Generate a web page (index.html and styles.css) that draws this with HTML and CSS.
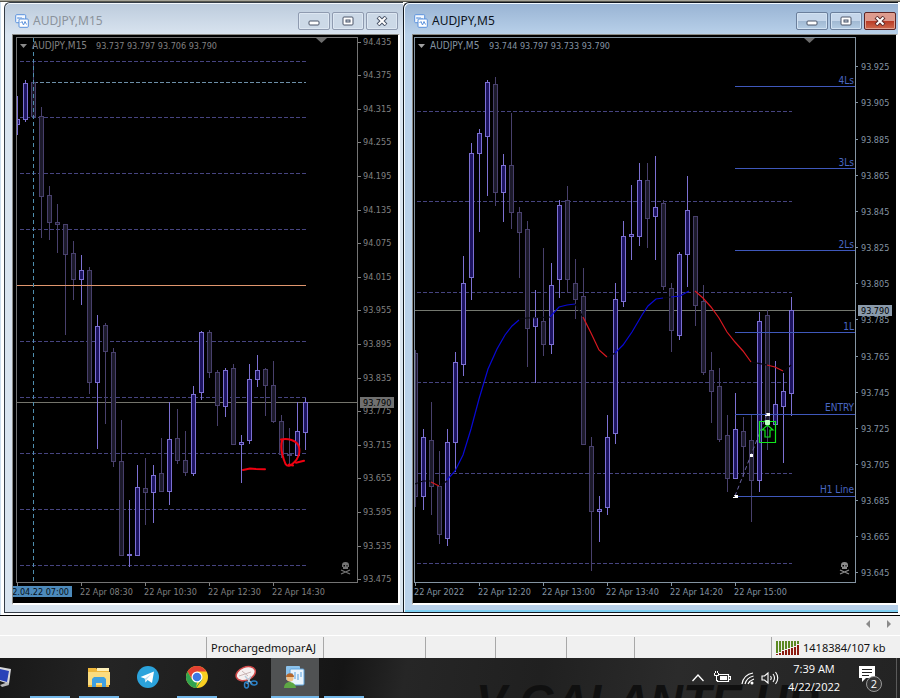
FILE: index.html
```html
<!DOCTYPE html>
<html lang="en">
<head>
<meta charset="utf-8">
<title>AUDJPY charts</title>
<link rel="stylesheet" href="styles.css">
</head>
<body>
<main class="desktop">
  <section class="window" aria-label="AUDJPY,M15">
    <header class="titlebar">
      <svg class="app-icon" viewBox="0 0 14 14" aria-hidden="true"><rect x=".7" y=".7" width="10" height="8" rx="1" fill="#f4f9ff" stroke="#5b92dd"/><path d="M2 4h1.500M4 5V3M6 5V3M8 4v1" stroke="#5b92dd" fill="none"/><rect x="4" y="5" width="9.300" height="8.300" rx="1" fill="#fff" stroke="#5b92dd"/><path d="M5.500 9l1.500-1.500 1.500 3.500L10 7.500l1.500 3" stroke="#5b92dd" fill="none"/></svg>
      <h2>AUDJPY,M15</h2>
      <div class="controls">
        <button aria-label="Minimize"><svg viewBox="0 0 12 10"><rect x="1" y="5" width="10" height="4" rx="1" fill="#fff" stroke="#4a5468"/></svg></button>
        <button aria-label="Restore"><svg viewBox="0 0 12 10"><rect x="1" y="1" width="10" height="8" rx="1" fill="#fff" stroke="#4a5468"/><rect x="4" y="4" width="4" height="2" fill="#cfd9e6" stroke="#4a5468"/></svg></button>
        <button aria-label="Close"><svg viewBox="0 0 12 10"><path d="M2 1l8 8M10 1L2 9" stroke="#4a5468" stroke-width="4"/><path d="M2.500 1.500l7 7M9.500 1.500l-7 7" stroke="#fff" stroke-width="2"/></svg></button>
      </div>
    </header>
    <svg id="m15" class="chart" viewBox="13 35 385 568" role="img" aria-label="AUDJPY 15 minute chart"></svg>
  </section>
  <section class="window active" aria-label="AUDJPY,M5">
    <header class="titlebar">
      <svg class="app-icon" viewBox="0 0 14 14" aria-hidden="true"><rect x=".7" y=".7" width="10" height="8" rx="1" fill="#f4f9ff" stroke="#5b92dd"/><path d="M2 4h1.500M4 5V3M6 5V3M8 4v1" stroke="#5b92dd" fill="none"/><rect x="4" y="5" width="9.300" height="8.300" rx="1" fill="#fff" stroke="#5b92dd"/><path d="M5.500 9l1.500-1.500 1.500 3.500L10 7.500l1.500 3" stroke="#5b92dd" fill="none"/></svg>
      <h2>AUDJPY,M5</h2>
      <div class="controls">
        <button aria-label="Minimize"><svg viewBox="0 0 12 10"><rect x="1" y="5" width="10" height="4" rx="1" fill="#fff" stroke="#4a5468"/></svg></button>
        <button aria-label="Restore"><svg viewBox="0 0 12 10"><rect x="1" y="1" width="10" height="8" rx="1" fill="#fff" stroke="#4a5468"/><rect x="4" y="4" width="4" height="2" fill="#cfd9e6" stroke="#4a5468"/></svg></button>
        <button class="close" aria-label="Close"><svg viewBox="0 0 12 10"><path d="M2 1l8 8M10 1L2 9" stroke="#5c2c2c" stroke-width="4"/><path d="M2.500 1.500l7 7M9.500 1.500l-7 7" stroke="#fff" stroke-width="2"/></svg></button>
      </div>
    </header>
    <svg id="m5" class="chart" viewBox="413 35 483 568" role="img" aria-label="AUDJPY 5 minute chart"></svg>
  </section>
</main>
<nav class="tabstrip" aria-label="Chart tabs">
  <button aria-label="Scroll left"><svg viewBox="0 0 5 8"><path d="M4 0v8L0 4z" fill="#8a8a8a"/></svg></button>
  <button aria-label="Scroll right"><svg viewBox="0 0 5 8"><path d="M1 0v8l4-4z" fill="#8a8a8a"/></svg></button>
</nav>
<div class="statusbar">
  <span></span><span class="profile">ProchargedmoparAJ</span><span></span><span></span><span></span><span></span><span></span>
  <span class="traffic"><svg viewBox="0 0 23 14" aria-hidden="true"><path d="M1 0v12M4 0v11M7 0v9M10 0v8M13 0v7M16 0v6M19 0v5M22 0v3" stroke="#5c8a22" stroke-width="2"/><path d="M1 13v1M4 12v2M7 10v4M10 9v5M13 8v6M16 7v7M19 6v8M22 4v10" stroke="#8e1c10" stroke-width="2"/></svg>1418384/107 kb</span>
</div>
<footer class="taskbar">
  <span class="wallpaper" aria-hidden="true">V GALANTE UP</span>
  <div class="apps">
    <button class="edge" aria-label="Computer"><svg viewBox="0 0 24 24"><path d="M8 2l11 2-2 15-9-3z" fill="#d8d8dc"/><path d="M8 4l9 2-2 11-7-2z" fill="#2942b8"/><path d="M8 20l8-3 1 3-7 2z" fill="#b8b8b8"/></svg></button>
    <button class="running" aria-label="Terminal"></button>
    <button class="running" aria-label="File Explorer"><svg viewBox="0 0 24 24"><path d="M1 3h8l2 2h11v17H1z" fill="#f0b83c"/><path d="M1 7h22v13H1z" fill="#fbdc7f"/><path d="M10 3h12v3H10z" fill="#fdf0b8"/><path d="M5 22v-8l2-2h10l2 2v8h-4v-4H9v4z" fill="#3fa0e0"/></svg></button>
    <button aria-label="Telegram"><svg viewBox="0 0 24 24"><circle cx="12" cy="12" r="11" fill="#2ba3dc"/><path d="M4.500 12L18 6.500 16 18l-4.500-3-2 2.500-.8-4z" fill="#fff"/><path d="M9 13.500L15.500 9l-5 5.500-1 3z" fill="#b8dcf0"/></svg></button>
    <button class="running" aria-label="Chrome"><svg viewBox="0 0 24 24"><circle cx="12" cy="12" r="11" fill="#f8cf22"/><path d="M2.500 6.500A11 11 0 0 1 21.500 6.500H12v5L7.500 15z" fill="#e34133"/><path d="M2.500 6.500L7.300 15 12 17l-1 6A11 11 0 0 1 2.500 6.500z" fill="#31a350"/><path d="M11 23l5.800-8.500" stroke="#31a350"/><circle cx="12" cy="12" r="5.500" fill="#fff"/><circle cx="12" cy="12" r="4.300" fill="#3d78e3"/></svg></button>
    <button aria-label="Snipping Tool"><svg viewBox="0 0 24 24"><ellipse cx="11.500" cy="8.500" rx="10" ry="6.500" transform="rotate(-22 12 8)" fill="#f6f0f0" stroke="#d04a4a" stroke-width="1.500"/><path d="M5 11l12-4M8 6l6 5" stroke="#c9b4b4"/><path d="M11 11l7 8M17 11l-4 8" stroke="#b9cddd" stroke-width="1.500"/><ellipse cx="12.500" cy="20" rx="2" ry="3" fill="none" stroke="#2b82c8" stroke-width="1.500"/><ellipse cx="20" cy="18" rx="3" ry="2" fill="none" stroke="#2b82c8" stroke-width="1.500"/></svg></button>
    <button class="running current" aria-label="MetaTrader"><svg viewBox="0 0 24 24"><rect x="3" y="1" width="14" height="14" rx="1" fill="#8bc2ec"/><rect x="7" y="4" width="14" height="16" rx="1" fill="#eaf4fc" stroke="#5fa3dc"/><path d="M9 8v5M12 7v7M15 9v6M18 7v5" stroke="#58a0dd"/><circle cx="7" cy="13" r="3.500" fill="#f1c28b"/><path d="M3 12c0-5 8-5 8 0z" fill="#b5672b"/><path d="M1 23c0-8 11-8 12 0z" fill="#5da744"/></svg></button>
    <button class="running" aria-label="Folder"></button>
  </div>
  <div class="tray">
    <svg class="chevron" viewBox="0 0 14 16"><path d="M1.500 11L7 5l5.500 6" fill="none" stroke="#fff" stroke-width="1.300"/></svg>
    <svg class="battery" viewBox="0 0 18 16"><path d="M6 4.500h9.500v7H4.500V10M15.500 6.500h2v3h-2" fill="none" stroke="#fff" stroke-width="1.200"/><rect x="7" y="6" width="7" height="4" fill="#fff"/><path d="M1.500 3v2.500h4V3M2.500 1v2M4.500 1v2M3.500 5v6" stroke="#fff" fill="none"/></svg>
    <svg class="wifi" viewBox="0 0 14 16"><g fill="none" stroke="#fff" stroke-width="1.200"><path d="M12 3C6 4 2 8 1 14"/><path d="M12.500 6C8 7 5 10 4 14"/><path d="M13 9c-3 1-5 3-6 5"/></g><circle cx="11" cy="13" r="1.500" fill="#fff"/></svg>
    <svg class="speaker" viewBox="0 0 18 16"><path d="M1 6h2.500L7 3v10l-3.500-3H1z M9.500 6q1.500 2 0 4M12 4q3 4 0 8M14.500 2q4.500 6 0 12" fill="none" stroke="#fff" stroke-width="1.100"/></svg>
    <time class="clock" datetime="2022-04-22T07:39">7:39 AM<br>4/22/2022</time>
    <button class="notify" aria-label="2 notifications"><svg viewBox="0 0 18 18"><path d="M1 1h16v12h-9l-4 4v-4H1z" fill="#fff"/><path d="M4 4.500h10M4 7.500h10M4 10.500h7" stroke="#222"/></svg><span class="badge">2</span></button>
  </div>
</footer>
<script src="charts.js"></script>
</body>
</html>
```
FILE: styles.css
```css
* { box-sizing: border-box; }
body {
  margin: 0;
  background: #fff;
  font-family: "Noto Sans", "Open Sans", sans-serif;
  font-size: 12px;
  color: #111;
}
button {
  padding: 0;
  border: 0;
  background: none;
  font: inherit;
}
svg { display: block; }

.desktop {
  display: grid;
  grid-template-columns: 399fr 495fr;
  padding: 1px 2px 2px 4px;
  background: #fff;
  border-top: 1px solid #a5a397;
  border-bottom: 1px solid #000;
  box-shadow: inset 0 1px #55554c, inset 1px 0 #cfdfee;
}
.window {
  min-width: 0;
  padding: 0 3px 7px 7px;
  border: solid #343c46;
  border-width: 1px 0 1px 1px;
  border-radius: 6px 0 0 0;
  background: linear-gradient(#bccbdc, #d9e4f0 32px, #d9e4ef);
  box-shadow: inset 0 1px #f4f8fc;
}
.window.active {
  padding: 0 0 7px 8px;
  border-color: #10161e;
  background: linear-gradient(#98b3d3, #b9d1ea 32px, #b9d1ea);
  box-shadow: inset 1px 1px #f0f8ff, inset 0 -2px #7fd0f2;
}
.titlebar {
  display: flex;
  align-items: center;
  height: 31px;
  gap: 4px;
  padding: 4px 2px 0 3px;
}
.active .titlebar { padding: 4px 2px 0 2px; }
.titlebar h2 {
  flex: 1;
  margin: 0;
  font-size: 12px;
  font-weight: 400;
  line-height: 16px;
  color: #8b939c;
}
.active .titlebar h2 { color: #0c1420; }
.app-icon { width: 14px; height: 14px; }
.controls { display: flex; gap: 2px; }
.controls button {
  display: grid;
  place-items: center;
  width: 32px;
  height: 18px;
  border: 1px solid #8f9bb0;
  border-radius: 2px;
  background: #ccd9e7;
  box-shadow: inset 0 0 0 1px #dde7f2;
}
.active .controls button {
  border-color: #6b7f9c;
  background: linear-gradient(#c5d6ea 50%, #a0b8d2 50%, #b5cde4);
  box-shadow: inset 0 0 0 1px #d2e2f2;
}
.active .controls .close {
  border-color: #5c2426;
  background: linear-gradient(#dd9a8e 50%, #b93a25 50%, #cf6a4e);
  box-shadow: inset 0 0 0 1px #e0a090;
}
.controls svg { width: 12px; height: 10px; }

.chart {
  width: 100%;
  height: auto;
  border: solid;
  border-width: 1px 2px 2px 1px;
  border-color: #8b8b87 #fff #fff #8b8b87;
  background: #000;
  font-family: "DejaVu Sans Condensed", "DejaVu Sans", sans-serif;
  font-size: 9px;
}
.chart .name { font-size: 10px; }

.tabstrip {
  display: flex;
  justify-content: flex-end;
  align-items: center;
  gap: 15px;
  height: 20px;
  padding: 0 9px 4px 0;
  border-bottom: 1px solid #fff;
  background: #f0f0f0;
}
.tabstrip svg { width: 5px; height: 8px; }

.statusbar {
  display: grid;
  grid-template-columns: 206fr 117fr 102fr 70fr 71fr 68fr 71fr 195fr;
  height: 22px;
  padding-top: 1px;
  background: #f0f0f0;
  line-height: 20px;
  font-size: 11px;
}
.statusbar span {
  display: flex;
  align-items: center;
  white-space: nowrap;
}
.statusbar span + span { border-left: 1px solid #a8a8a8; }
.statusbar .profile { padding-left: 4px; }
.statusbar span.traffic { gap: 4px; margin-left: 66px; padding-left: 4px; }
.traffic svg { width: 23px; height: 14px; flex: none; }

.taskbar {
  position: relative;
  display: flex;
  justify-content: space-between;
  height: 40px;
  overflow: hidden;
  background: linear-gradient(100deg, #181818, #242424 12%, #1b1b1b 30%, #151515 38%, #262626 45%, #202020 60%, #2b2b2b 75%, #232323);
  color: #fff;
}
.wallpaper {
  position: absolute;
  left: 476px;
  top: 20px;
  font: italic bold 46px/46px "Liberation Sans", sans-serif;
  white-space: nowrap;
  color: #101010;
}
.apps { display: flex; position: relative; }
.apps button {
  display: grid;
  place-items: center;
  width: 40px;
  margin-right: 9px;
  border-bottom: 2px solid transparent;
}
.apps .edge { width: 21px; place-items: center start; }
.apps .running { border-bottom-color: #74b8ea; }
.apps .current { width: 48px; margin: 0 5px 0 -4px; background: #505253; }
.apps svg { width: 24px; height: 24px; }
.apps .edge svg { margin-left: -8px; }
.tray {
  position: relative;
  display: flex;
  align-items: center;
  padding-right: 3px;
  font-family: "Open Sans", sans-serif;
}
.tray::after {
  content: "";
  align-self: stretch;
  width: 1px;
  margin-left: 20px;
  background: #5a5a5a;
}
.chevron { width: 14px; height: 16px; margin-right: 8px; }
.battery { width: 18px; height: 16px; margin-right: 10px; }
.wifi { width: 14px; height: 16px; margin-right: 6px; }
.speaker { width: 18px; height: 16px; margin-right: 7px; }
.clock {
  width: 56px;
  font-size: 11px;
  line-height: 18px;
  text-align: center;
}
.notify {
  position: relative;
  margin-left: 16px;
  color: #fff;
}
.notify > svg { width: 18px; height: 18px; margin-bottom: 8px; }
.badge {
  position: absolute;
  right: -6px;
  bottom: -1px;
  width: 16px;
  height: 16px;
  border: 1px solid #9a9a9a;
  border-radius: 50%;
  background: #333;
  font-size: 11px;
  line-height: 14px;
  text-align: center;
}
```
FILE: charts.js
```js
const NS = "http://www.w3.org/2000/svg";

function add(parent, name, attrs, text) {
  const el = document.createElementNS(NS, name);
  for (const key in attrs) el.setAttribute(key, attrs[key]);
  if (text !== undefined) el.textContent = text;
  parent.appendChild(el);
  return el;
}
function hline(svg, x1, x2, y, color, dash) {
  add(svg, "line", { x1, x2, y1: y + 0.5, y2: y + 0.5, stroke: color, "stroke-dasharray": dash || "none", "shape-rendering": "crispEdges" });
}
function vline(svg, x, y1, y2, color, dash) {
  add(svg, "line", { x1: x + 0.5, x2: x + 0.5, y1, y2, stroke: color, "stroke-dasharray": dash || "none", "shape-rendering": "crispEdges" });
}
function label(svg, x, y, text, fill, anchor, cls) {
  add(svg, "text", { x, y, fill, "text-anchor": anchor || "start", class: cls || "scale" }, text);
}

// Each candle: high, body top, body bottom, low, 1 for rising / 0 for falling.
function candles(svg, left, list) {
  list.forEach(([high, top, bottom, low, up], i) => {
    const x = left + i * 8;
    const color = up ? "#7c70d2" : "#48406c";
    vline(svg, x, high, low + 1, color);
    const clip = i === 0 ? 2 : 0;
    add(svg, "rect", {
      x: x - 1.5 + clip, y: top + 0.5, width: 4 - clip, height: Math.max(bottom - top, 1),
      fill: up ? "#1d1460" : "#1c1a2b", stroke: color, "shape-rendering": "crispEdges"
    });
  });
}
function frame(svg, x1, x2, color) {
  add(svg, "rect", { x: x1 + 0.5, y: 37.5, width: x2 - x1, height: 545, fill: "none", stroke: color, "shape-rendering": "crispEdges" });
}
function skull(svg, cx, color) {
  const g = add(svg, "g", { fill: color });
  add(g, "path", { d: `M${cx - 3} 565q0-3 3.500-3t3.500 3v2h-1v2h-5v-2h-1z` });
  add(g, "path", { d: `M${cx - 1.500} 565h1.500v1.500h-1.500zM${cx + 1.500} 565h1v1.500h-1z`, fill: "#000" });
  add(g, "path", { d: `M${cx - 4} 570l9 4M${cx + 5} 570l-9 4`, stroke: color, "stroke-width": 1.300 });
}

function drawM15() {
  const svg = document.getElementById("m15");
  const gray = "#808080";
  [61, 117, 173, 229, 341, 397, 453, 509, 565].forEach(y => hline(svg, 20, 306, y, "#464480", "4 2"));
  hline(svg, 34, 306, 82, "#6d8fa8", "4 2");
  hline(svg, 17, 357, 402, "#74746c");
  candles(svg, 17, [
    [96,119,124,134,1],[80,83,119,121,1],[61,82,116,116,0],[107,116,196,237,0],[186,195,222,239,0],
    [204,222,224,252,0],[224,224,254,334,0],[241,253,279,299,0],[255,270,279,304,1],[267,270,382,393,0],
    [315,326,382,448,1],[323,325,351,423,0],[348,352,461,466,0],[420,461,555,555,0],[500,554,555,566,1],
    [465,487,555,555,1],[458,488,492,524,0],[465,475,492,522,1],[438,473,491,491,0],[402,439,491,504,1],
    [409,438,460,463,0],[431,460,472,475,0],[386,394,473,475,1],[331,332,392,399,1],[330,332,372,377,0],
    [370,372,405,425,0],[368,370,406,416,1],[364,368,444,444,0],[435,442,444,482,1],[364,379,440,443,1],
    [355,370,379,386,1],[368,369,385,415,0],[361,385,421,422,0],[415,421,454,457,0],[428,454,455,465,0],
    [402,431,455,455,1],[398,402,432,449,1]
  ]);
  hline(svg, 17, 306, 285, "#e0966e");
  vline(svg, 33, 38, 582, "#4f8eae", "4 3");
  frame(svg, 16, 357, "#747474");
  add(svg, "path", { d: "M316 38h11l-5.500 5z", fill: "#6c6c6c" });
  add(svg, "path", { d: "M20 44h7l-3.500 4z", fill: "#8a8a8a" });
  label(svg, 32, 49, "AUDJPY,M15", gray, "start", "name");
  label(svg, 96, 49, "93.737 93.797 93.706 93.790", gray);
  for (let i = 0; i < 17; i++) {
    const y = Math.round(41.5 + i * 33.6);
    hline(svg, 358, 361, y, gray);
    label(svg, 363, y + 3, (94.435 - i * 0.06).toFixed(3), gray);
  }
  add(svg, "rect", { x: 360, y: 397, width: 34, height: 11, fill: "#707070" });
  label(svg, 363, 406, "93.790", "#000");
  for (let i = 0; i < 5; i++) vline(svg, 17 + i * 64, 583, 586, gray);
  ["22 Apr 08:30", "22 Apr 10:30", "22 Apr 12:30", "22 Apr 14:30"].forEach((t, i) => {
    label(svg, 80 + i * 64, 595, t, gray);
  });
  add(svg, "rect", { x: 13, y: 586, width: 59, height: 11, fill: "#4d8abb" });
  label(svg, 69, 595, "2.04.22 07:00", "#061018", "end");
  skull(svg, 345, "#747474");
  add(svg, "path", {
    d: "M243 470l7-1.500 6 .5 9 .2M281 439.500c7-1.500 15 1 17.500 6 2.500 7-.5 14-5 17.500-3 3-6 4-8 1-2-5-5-13-4-20 .3-3 1-4 1-4M289 464.500l4 1M296 462.800l8-2",
    fill: "none", stroke: "#f00010", "stroke-width": 2, "stroke-linecap": "round"
  });
}

function drawM5() {
  const svg = document.getElementById("m5");
  const gray = "#8494a2";
  [111, 201, 292, 382, 473, 563].forEach(y => hline(svg, 417, 792, y, "#464480", "4 2"));
  hline(svg, 415, 855, 310, "#74786f");
  candles(svg, 415, [
    [350,353,496,506,0],[429,437,496,509,1],[402,440,486,514,0],[451,486,534,543,0],[429,442,538,545,1],
    [352,362,442,471,1],[256,283,364,375,1],[143,153,277,299,1],[129,133,153,231,1],[80,82,136,195,1],
    [77,84,192,205,0],[154,165,192,221,1],[113,165,212,228,0],[207,212,232,277,0],[221,229,328,366,0],
    [290,317,326,382,1],[248,321,344,355,0],[263,285,344,353,1],[200,205,279,297,1],[186,200,279,292,0],
    [259,283,299,318,0],[268,296,444,444,0],[437,446,511,570,0],[496,509,511,541,1],[415,437,507,514,1],
    [283,299,433,443,1],[221,236,301,306,1],[185,234,236,259,1],[163,180,236,245,1],[163,180,218,247,0],
    [156,207,216,259,1],[200,203,286,289,0],[283,288,330,351,0],[252,254,335,339,1],[176,210,254,286,1],
    [216,216,305,325,0],[285,301,372,374,0],[352,370,391,422,0],[368,386,439,441,0],[415,435,478,491,0],
    [393,429,478,478,1],[417,431,446,476,0],[415,440,480,521,0],[312,321,480,491,1],[310,315,424,449,0],
    [361,404,424,424,1],[373,391,406,462,1],[297,310,393,415,1]
  ]);
  const path = (d, stroke, width) => add(svg, "path", { d, stroke, fill: "none", "stroke-width": width || 1.200 });
  path("M415 484l8-3 8 0M439 486l8-5M519 319l8-1 24-1M575 304l8 13M607 358l8-5M663 298l8-1M751 362l16 3M783 372l8-7", "#05050c");
  path("M447 480l8-9 8-16 8-26 8-30 9-30 9-20 8-14 7-9 7-6M550 317l9-10 8-2 8-1M615 353l8-8 9-13 10-17 6-9 8-7 7-1M671 297l9-1 9-5", "#0909d5");
  path("M431 482l8 4M583 317l8 16 8 17 8 7M695 291l8 7 8 9 8 11 8 14 8 10 8 9 8 11M767 365l8 2 8 4", "#d81820");
  const names = ["4Ls", "3Ls", "2Ls", "1L", "ENTRY", "H1 Line"];
  names.forEach((t, i) => {
    hline(svg, 735, 855, 86 + i * 82, "#3f58bb");
    label(svg, 854, 84 + i * 82 - (i > 3 ? 1 : 0), t, "#4a68c4", "end", "name");
  });
  path("M735 496l16-41 16-41", "#6b65a5", 1);
  svg.lastChild.setAttribute("stroke-dasharray", "4 3");
  add(svg, "path", { d: "M759.500 421.500h16v21h-16zM766 437h4v-7h3l-5.500-5-5.500 5h3v7z", fill: "none", stroke: "#10e51c", "stroke-width": 1.200 });
  add(svg, "path", { d: "M766 413h4v3h-5v-1h2zM750 454h3v3h-3zM734 495h4v3h-5v-1h2z", fill: "#fff" });
  add(svg, "rect", { x: 765, y: 420, width: 5, height: 5, rx: 1, fill: "#baffc0" });
  frame(svg, 414, 855, gray);
  add(svg, "path", { d: "M804 38h11l-5.500 5z", fill: "#6c6c6c" });
  add(svg, "path", { d: "M418 44h7l-3.500 4z", fill: "#a0a0a0" });
  label(svg, 430, 49, "AUDJPY,M5", gray, "start", "name");
  label(svg, 489, 49, "93.744 93.797 93.733 93.790", gray);
  for (let i = 0; i < 15; i++) {
    const y = Math.round(66.3 + i * 36.15);
    hline(svg, 856, 858, y, gray);
    label(svg, 861, y + 4, (93.925 - i * 0.02).toFixed(3), gray);
  }
  add(svg, "rect", { x: 858, y: 305, width: 34, height: 11, fill: "#8a9aab" });
  label(svg, 861, 314, "93.790", "#000");
  ["22 Apr 2022", "22 Apr 12:20", "22 Apr 13:00", "22 Apr 13:40", "22 Apr 14:20", "22 Apr 15:00"].forEach((t, i) => {
    vline(svg, 415 + i * 64, 583, 586, gray);
    label(svg, 414 + i * 64, 595, t, gray);
  });
  skull(svg, 844, "#8c8c8c");
}

drawM15();
drawM5();
```
